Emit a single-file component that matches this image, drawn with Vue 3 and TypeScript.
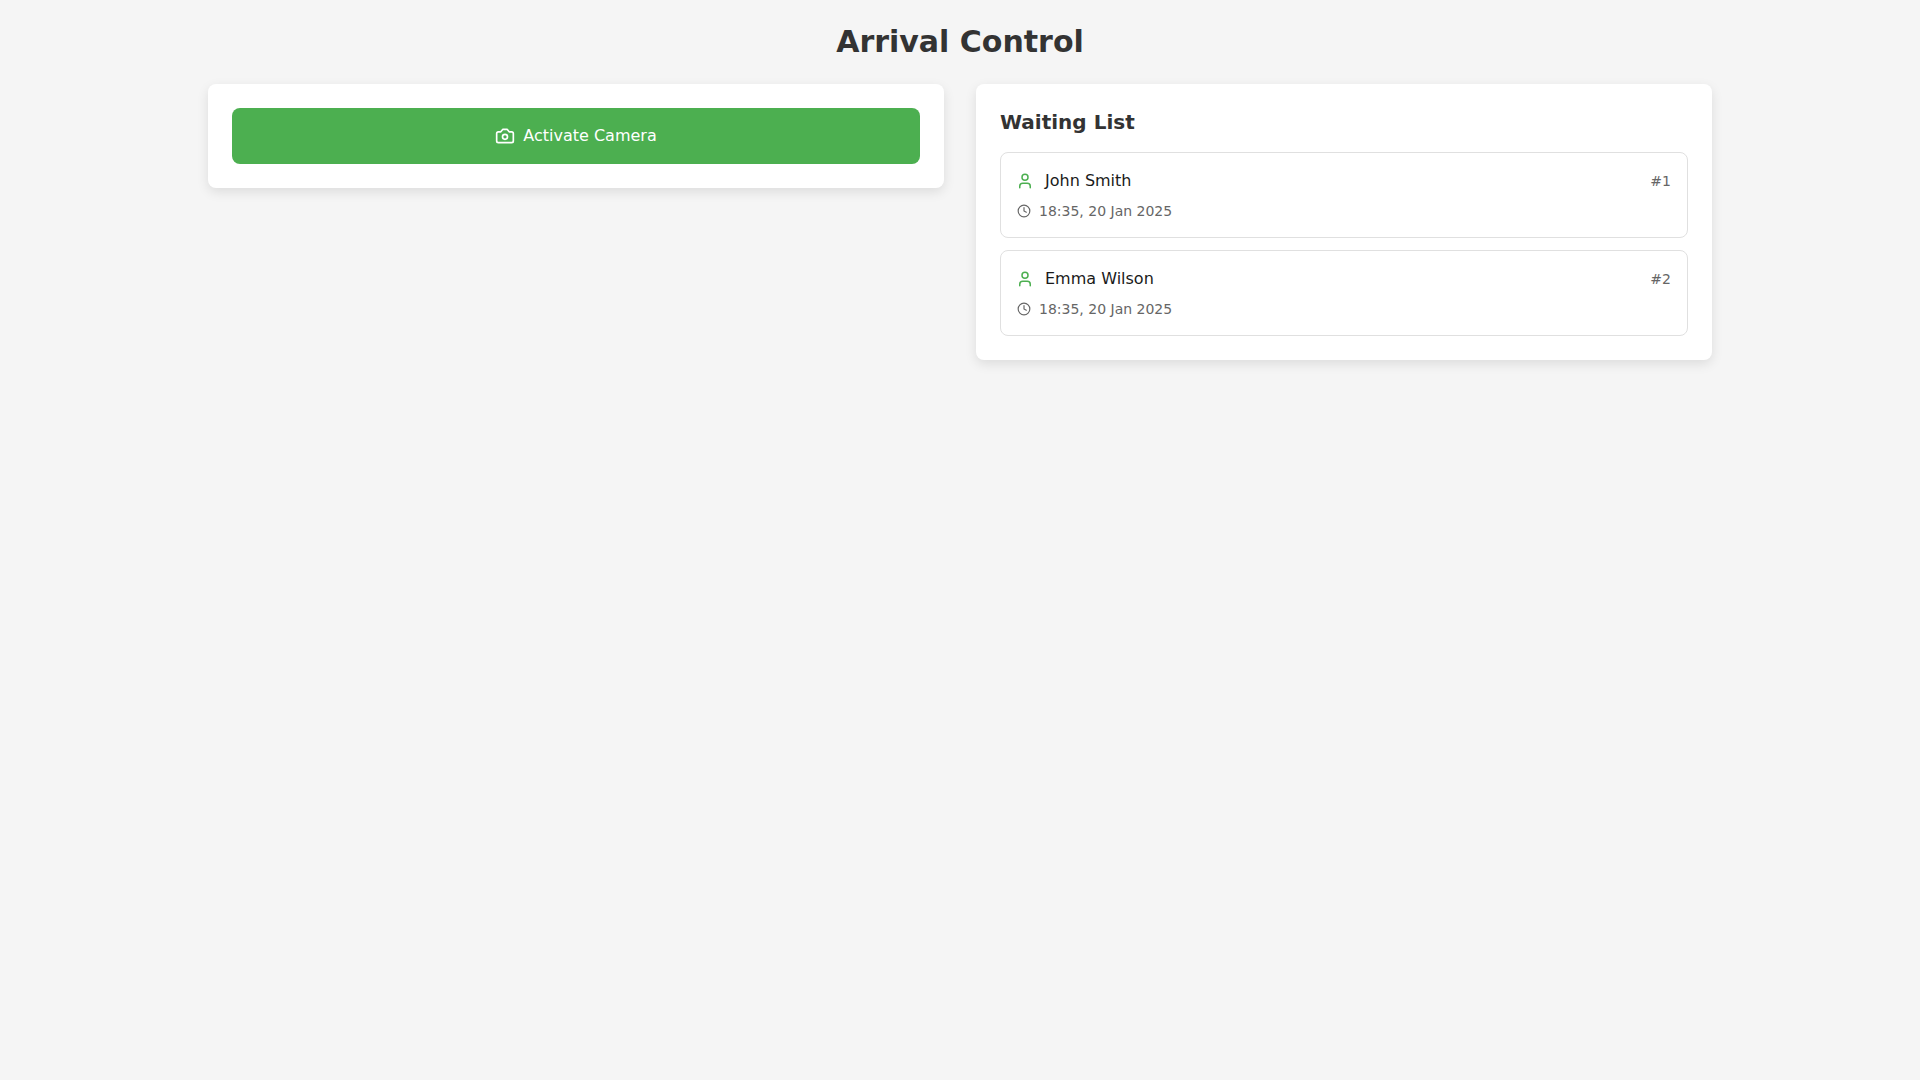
<script setup lang="ts">
interface Guest {
  id: number
  name: string
  time: string
}

const guests: Guest[] = [
  { id: 1, name: 'John Smith', time: '18:35, 20 Jan 2025' },
  { id: 2, name: 'Emma Wilson', time: '18:35, 20 Jan 2025' }
]
</script>

<template>
  <div class="page">
    <h1 class="title">Arrival Control</h1>
    <div class="columns">
      <section class="card">
        <button class="camera-btn" type="button">
          <svg class="camera-icon" viewBox="0 0 24 24" fill="none" stroke="currentColor" stroke-width="2" stroke-linecap="round" stroke-linejoin="round">
            <path d="M14.5 4h-5L7 7H4a2 2 0 0 0-2 2v9a2 2 0 0 0 2 2h16a2 2 0 0 0 2-2V9a2 2 0 0 0-2-2h-3l-2.5-3z" />
            <circle cx="12" cy="13" r="3" />
          </svg>
          <span class="camera-label">Activate Camera</span>
        </button>
      </section>

      <section class="card">
        <h2 class="list-title">Waiting List</h2>
        <div class="list">
          <div v-for="guest in guests" :key="guest.id" class="guest">
            <div class="guest-top">
              <div class="guest-name">
                <svg class="user-icon" viewBox="0 0 24 24" fill="none" stroke="currentColor" stroke-width="2" stroke-linecap="round" stroke-linejoin="round">
                  <path d="M19 21v-2a4 4 0 0 0-4-4H9a4 4 0 0 0-4 4v2" />
                  <circle cx="12" cy="7" r="4" />
                </svg>
                <span>{{ guest.name }}</span>
              </div>
              <span class="guest-num">#{{ guest.id }}</span>
            </div>
            <div class="guest-time">
              <svg class="clock-icon" viewBox="0 0 24 24" fill="none" stroke="currentColor" stroke-width="2" stroke-linecap="round" stroke-linejoin="round">
                <circle cx="12" cy="12" r="10" />
                <path d="M12 6v6l4 2" />
              </svg>
              <span>{{ guest.time }}</span>
            </div>
          </div>
        </div>
      </section>
    </div>
  </div>
</template>

<style>
html,
body {
  margin: 0;
  background: #f5f5f5;
}
</style>

<style scoped>
.page {
  box-sizing: border-box;
  min-height: 100vh;
  max-width: 1536px;
  margin: 0 auto;
  padding: 24px 16px;
  background: #f5f5f5;
  font-family: "DejaVu Sans", sans-serif;
}

.title {
  margin: 0 0 24px;
  font-size: 30px;
  line-height: 36px;
  font-weight: 700;
  text-align: center;
  color: #333333;
}

.columns {
  display: grid;
  grid-template-columns: 1fr 1fr;
  gap: 32px;
  align-items: start;
}

.card {
  padding: 24px;
  background: #ffffff;
  border-radius: 8px;
  box-shadow: 0 4px 12px rgba(0, 0, 0, 0.1);
}

.camera-btn {
  display: flex;
  align-items: center;
  justify-content: center;
  gap: 8px;
  width: 100%;
  height: 56px;
  padding: 0;
  border: none;
  border-radius: 8px;
  background: #4caf50;
  color: #ffffff;
  font-family: inherit;
  font-size: 16px;
  line-height: 24px;
}

.camera-label {
  margin-top: -1px;
}

.camera-icon {
  width: 20px;
  height: 20px;
}

.list-title {
  margin: 0 0 16px;
  font-size: 20px;
  line-height: 28px;
  font-weight: 700;
  color: #333333;
}

.list {
  display: flex;
  flex-direction: column;
  gap: 12px;
}

.guest {
  box-sizing: border-box;
  height: 86px;
  padding: 16px;
  border: 1px solid #e0e0e0;
  border-radius: 8px;
}

.guest-top {
  display: flex;
  align-items: center;
  justify-content: space-between;
  height: 24px;
}

.guest-name {
  display: flex;
  align-items: center;
  gap: 11px;
  font-size: 16px;
  line-height: 22px;
  color: #1a1a1a;
}

.user-icon {
  width: 18px;
  height: 18px;
  margin-left: -1px;
  color: #4caf50;
}

.guest-num {
  font-size: 14px;
  color: #666666;
}

.guest-time {
  display: flex;
  align-items: center;
  gap: 8px;
  height: 20px;
  margin-top: 8px;
  font-size: 14px;
  color: #666666;
}

.clock-icon {
  width: 14px;
  height: 14px;
}
</style>
